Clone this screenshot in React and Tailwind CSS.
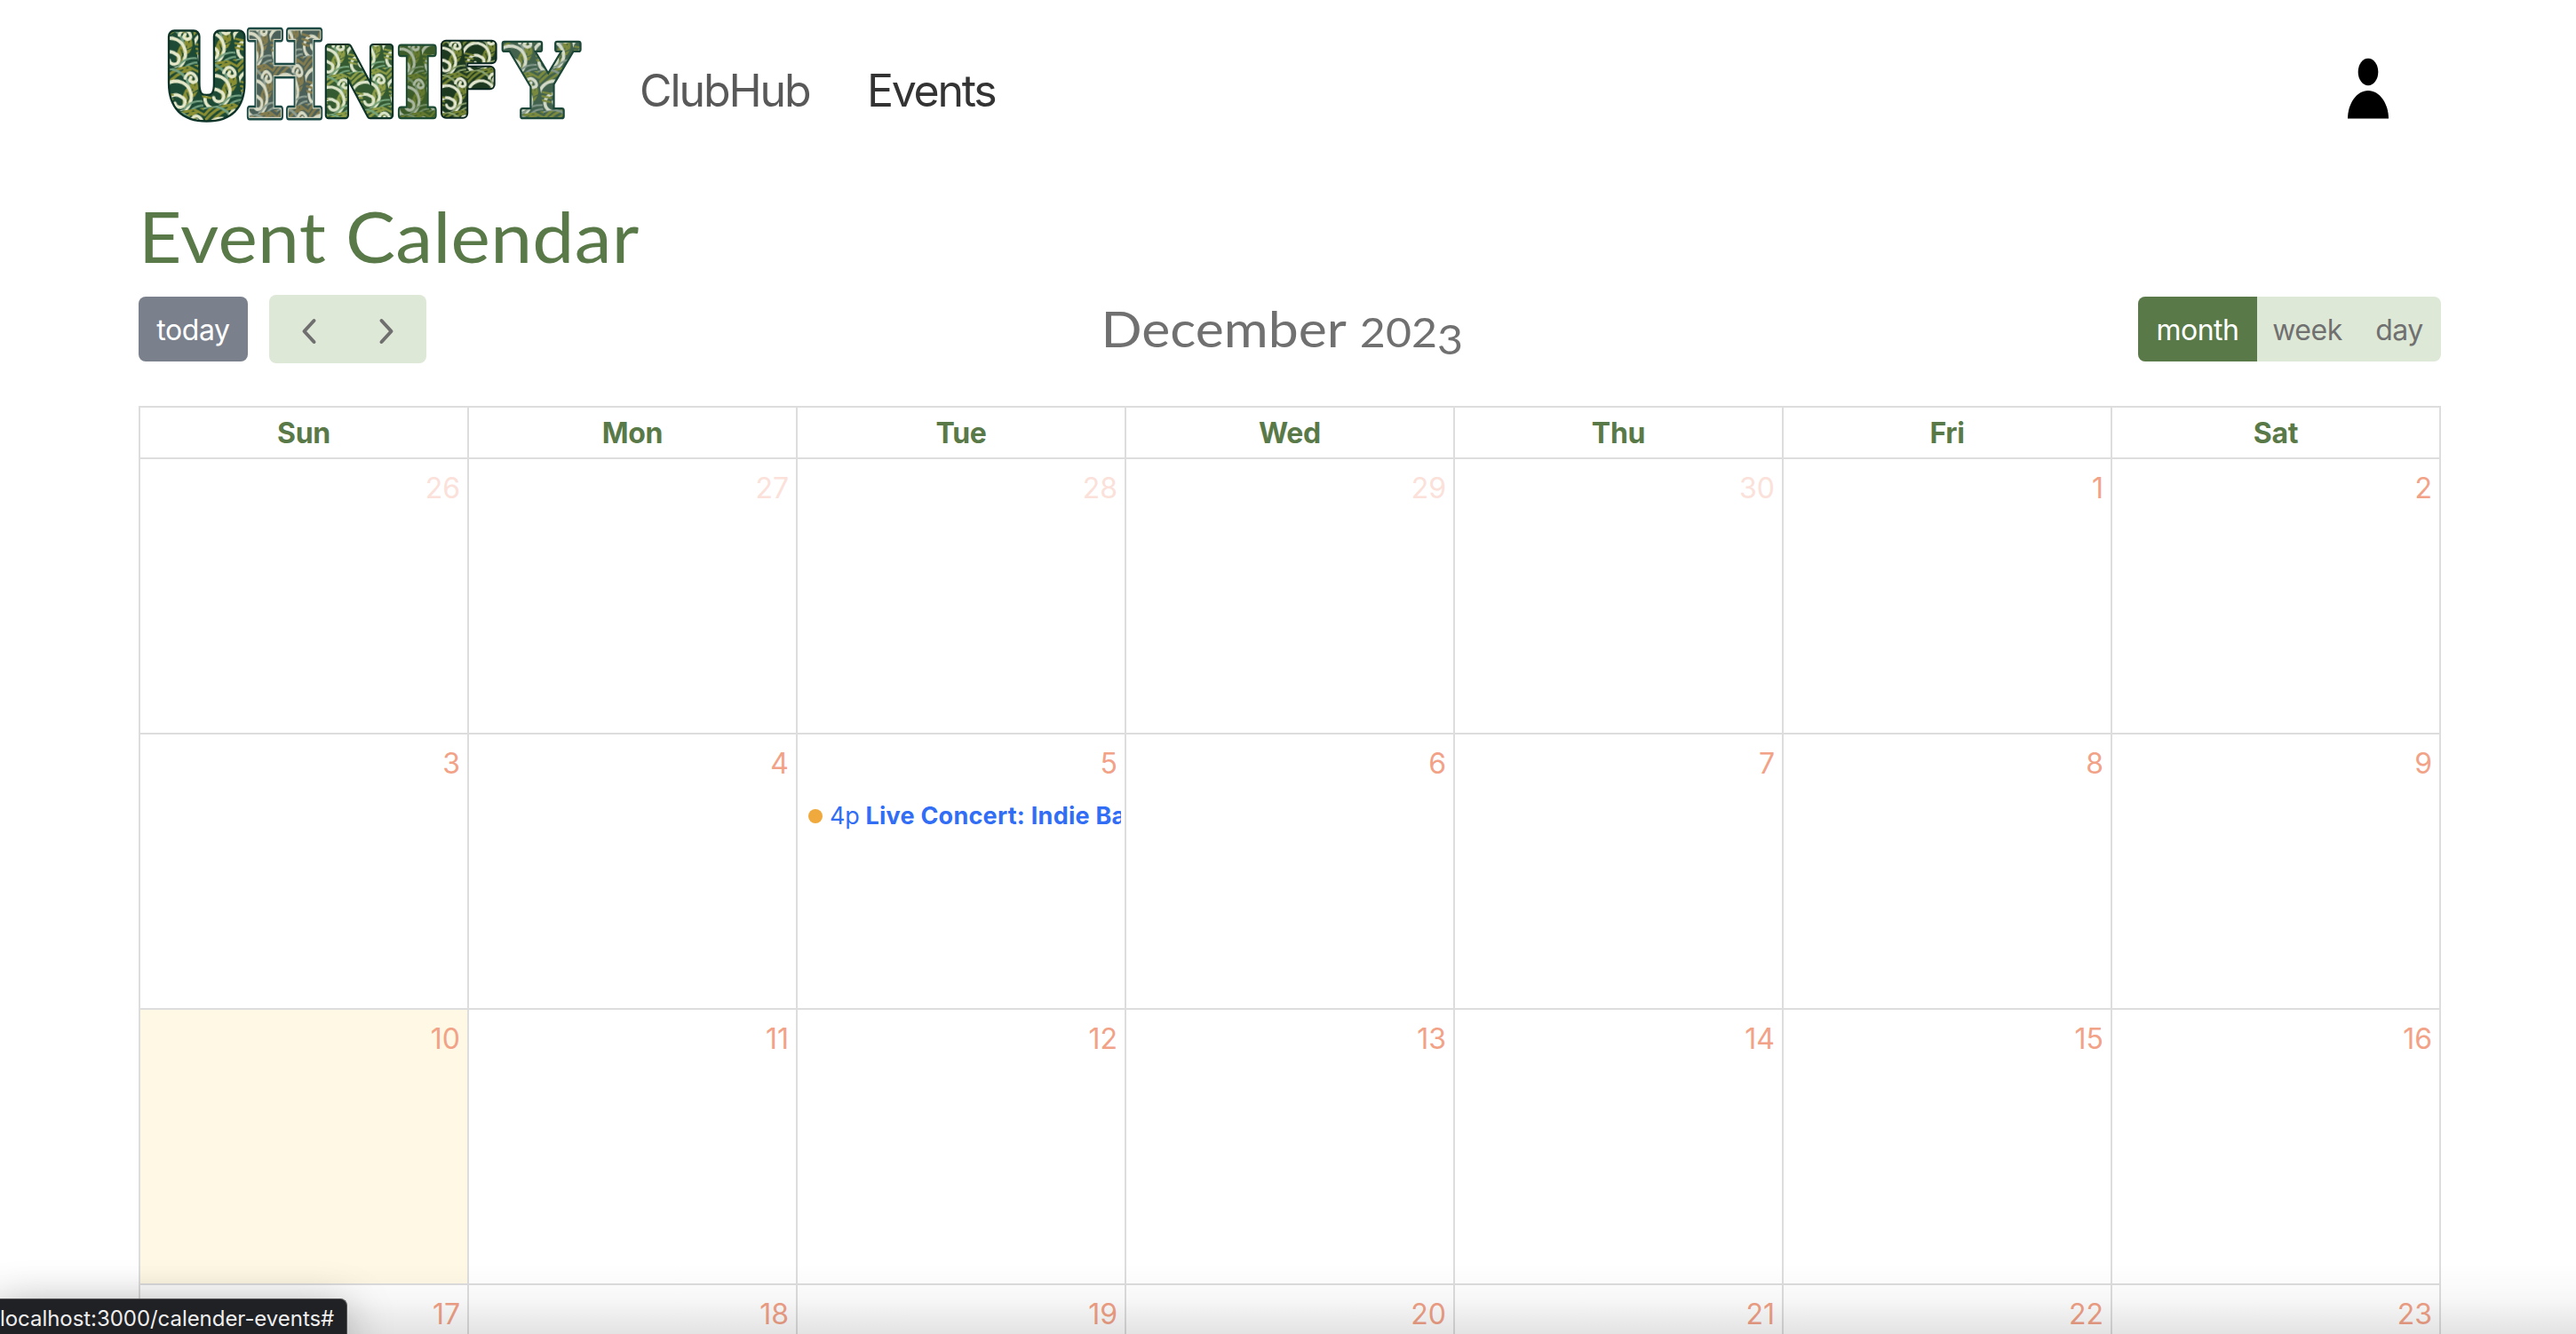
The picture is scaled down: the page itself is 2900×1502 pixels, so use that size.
const WAVES = [
  'M-2 30a15 15 0 1 1 18 12a9 9 0 1 1 2-14a5 5 0 1 1-7 5',
  'M-6 38a21 21 0 1 1 33-16',
  'M-12 42a27 27 0 1 1 43-18',
];

function Foliage({ id, base, leaf, pale, mid }) {
  return (
    <pattern id={id} width="38" height="41" patternUnits="userSpaceOnUse" patternTransform="rotate(-8)">
      <rect width="38" height="41" fill={base} />
      <g fill="none" strokeLinecap="round">
        <path d="M0 7Q12-4 22-1M0 12Q14 0 26 1M3 16Q18 4 32 3" stroke={leaf} strokeWidth="2.6" />
        <path d="M19 38Q17 22 34 15Q40 25 19 38Z" fill={leaf} stroke={leaf} strokeWidth="1" />
        <path d="M21 36L33 18M24 25l1 6l6-1M28 21l1 5l6-2" stroke={base} strokeWidth="1" />
        <path d={WAVES[1]} stroke={mid} strokeWidth="2.4" />
        <path d={WAVES[2]} stroke={leaf} strokeWidth="1.8" />
        <path d={WAVES[0]} stroke={pale} strokeWidth="3.2" />
        <path d="M24 11q5-8 10-1q3 6-3 6q-5-2-1-5" stroke={pale} strokeWidth="3" />
        <path d="M18 41q8-9 20-6M24 43q6-5 14-4" stroke={mid} strokeWidth="1.8" />
        <path d="M2 22l8 3M1 26l8 3M0 30l8 3" stroke={leaf} strokeWidth="2" />
        <path d="M28 0l10 7M33-2l6 4" stroke={leaf} strokeWidth="2.2" />
      </g>
    </pattern>
  );
}

// x, top, w, h: outer box of each letter; grow: how much its strokes are thickened.
const LETTERS = [
  { c: 'U', x: 189, w: 87, top: 34, h: 100, grow: 9, family: 'DejaVu Sans', fill: 'url(#fa)', edge: '#0d3328' },
  { c: 'H', x: 277, w: 87, top: 31.5, h: 102.5, grow: 1, rimWidth: 2, family: 'DejaVu Serif', fill: 'url(#fb)', edge: '#1d4a44', rim: '#cfd3bf' },
  { c: 'N', x: 366, w: 77, top: 49, h: 85, grow: 4, family: 'DejaVu Sans', fill: 'url(#fc)', edge: '#0d3328' },
  { c: 'I', x: 447, w: 45.5, top: 49, h: 85, grow: 4, family: 'DejaVu Serif', fill: 'url(#fd)', edge: '#1c4a33' },
  { c: 'F', x: 496, w: 68, top: 46, h: 88, grow: 8, family: 'DejaVu Sans', fill: 'url(#fe)', edge: '#0a2620' },
  { c: 'Y', x: 566, w: 89, top: 46.5, h: 87.5, grow: 2, family: 'DejaVu Serif', fill: 'url(#ff)', edge: '#1c4738' },
];

// Left bearing and ink width of each bold glyph at 100px.
const INK = { U: [8.5, 64], H: [4, 86.5], N: [9.2, 65.3], I: [4, 39], F: [9.2, 55.2], Y: [0, 73] };

function Letter({ l }) {
  const rim = l.rim ? l.rimWidth : 0;
  const full = l.grow + rim + 4;
  const sx = (l.w - full) / INK[l.c][1];
  const sy = (l.h - full) / 72.9;
  return (
    <g
      transform={`translate(${l.x + full / 2 - INK[l.c][0] * sx} ${l.top + l.h - full / 2}) scale(${sx} ${sy})`}
      strokeLinejoin="round"
    >
      <text fontSize="100" fontWeight="700" fontFamily={l.family} fill={l.edge} stroke={l.edge} strokeWidth={full}>
        {l.c}
      </text>
      {l.rim && (
        <text aria-hidden="true" fontSize="100" fontWeight="700" fontFamily={l.family} fill={l.rim} stroke={l.rim} strokeWidth={l.grow + rim}>
          {l.c}
        </text>
      )}
      <text aria-hidden="true" fontSize="100" fontWeight="700" fontFamily={l.family} fill={l.fill} stroke={l.fill} strokeWidth={l.grow}>
        {l.c}
      </text>
    </g>
  );
}

function Logo() {
  return (
    <svg className="block h-[160px] w-[680px] shrink-0 overflow-visible" viewBox="0 0 680 160" role="img" aria-label="UHnify">
      <defs>
        <Foliage id="fa" base="#1d4a34" leaf="#8a8e32" pale="#e5e8c9" mid="#73a081" />
        <Foliage id="fb" base="#4a6058" leaf="#857c4e" pale="#d8dac4" mid="#8d9e92" />
        <Foliage id="fc" base="#345a32" leaf="#8d9c45" pale="#dce5c9" mid="#74a379" />
        <Foliage id="fd" base="#3b5b29" leaf="#64782e" pale="#a9b7a0" mid="#718c64" />
        <Foliage id="fe" base="#1d3920" leaf="#738331" pale="#e2e6cf" mid="#8ba16c" />
        <Foliage id="ff" base="#42624e" leaf="#7b8a3c" pale="#d4dac8" mid="#83988b" />
      </defs>
      {LETTERS.map((l) => (
        <Letter key={l.c} l={l} />
      ))}
    </svg>
  );
}

const DAYS = ['Sun', 'Mon', 'Tue', 'Wed', 'Thu', 'Fri', 'Sat'];
const WEEKS = [
  [26, 27, 28, 29, 30, 1, 2],
  [3, 4, 5, 6, 7, 8, 9],
  [10, 11, 12, 13, 14, 15, 16],
  [17, 18, 19, 20, 21, 22, 23],
];

function Chevron({ d }) {
  return (
    <svg className="h-8 w-8" viewBox="0 0 32 32" fill="none" stroke="#6f6f6f" strokeWidth="4" strokeLinecap="round" strokeLinejoin="round">
      <path d={d} />
    </svg>
  );
}

export default function App() {
  return (
    <div className="relative flex h-[1502px] w-[2900px] flex-col overflow-hidden bg-white font-['Inter','Liberation_Sans',sans-serif]">
      <header className="flex h-[200px] shrink-0 items-start">
        <Logo />
        <nav className="flex pt-[70px] text-[50px] leading-[64px]">
          <a className="ml-[40px] w-[256px] whitespace-nowrap text-[#595959] tracking-[-2.1px]">ClubHub</a>
          <a className="whitespace-nowrap text-[#333333] tracking-[-2.3px]">Events</a>
        </nav>
        <svg className="mt-[64px] mr-[210px] ml-auto h-[70px] w-[48px]" viewBox="0 0 48 70">
          <ellipse cx="24" cy="17" rx="11.3" ry="15.3" />
          <path d="M1 69.5C1 53 11 38 24 38S47 53 47 69.5Z" />
        </svg>
      </header>

      <main className="ml-[156px] w-[2592px]">
        <h1 className="h-[132px] origin-left scale-x-[1.05] pt-[17px] font-['Lato',sans-serif] text-[80px] leading-[96px] tracking-[0.3px] whitespace-nowrap text-[#597a48]">Event Calendar</h1>

        <div className="flex h-[77px] items-center justify-between">
          <div className="flex w-[324px] items-center gap-[24px]">
            <button className="h-[73px] w-[123px] rounded-[8px] bg-[#7a808c] pt-[2px] text-[32px] tracking-[-0.4px] text-white">today</button>
            <div className="flex h-[77px] w-[177px] items-center rounded-[8px] bg-[#dee8d7]">
              <span className="flex w-[89px] justify-center pt-[5px]"><Chevron d="M21.500 4L10.500 16L21.500 28" /></span>
              <span className="flex w-[88px] justify-center pt-[5px]"><Chevron d="M9.500 4L20.500 16L9.500 28" /></span>
            </div>
          </div>
          <h2 className="flex scale-x-[1.065] items-baseline font-['Lato',sans-serif] text-[57px] leading-[68px] whitespace-nowrap text-[#707070]">
            <span>December</span>
            <span className="ml-[14px] text-[47px]">202</span>
            <span className="relative top-[8px] text-[47px]">3</span>
          </h2>
          <div className="flex h-[73px] w-[341px] overflow-hidden rounded-[8px] bg-[#dee8d7] text-[32px] leading-[75px] tracking-[-0.5px] text-[#707070]">
            <span className="w-[134px] bg-[#597a48] text-center text-white">month</span>
            <span className="w-[113px] text-center">week</span>
            <span className="w-[94px] text-center">day</span>
          </div>
        </div>

        <table className="mt-[48px] w-[2592px] table-fixed border-collapse">
          <thead>
            <tr className="h-[58px]">
              {DAYS.map((d) => (
                <th key={d} className="border-2 border-[#dddddd] p-0 pt-[2px] text-[32px] leading-[54px] font-bold tracking-[-0.3px] text-[#597a48]">{d}</th>
              ))}
            </tr>
          </thead>
          <tbody>
            {WEEKS.map((week, r) => (
              <tr key={r} className="h-[310px]">
                {week.map((n) => (
                  <td key={n} className={n === 10 ? 'border-2 border-[#dddddd] bg-[#fef8e4] p-0 align-top' : 'border-2 border-[#dddddd] p-0 align-top'}>
                    <div className={r === 0 && n > 20 ? 'pt-[9px] pr-[8px] text-right text-[32px] leading-[48px] text-[#fbe1d9]' : 'pt-[9px] pr-[8px] text-right text-[32px] leading-[48px] text-[#f2a287]'}>{n}</div>
                    {n === 5 && (
                      <div className="mt-[13px] mr-[4px] ml-[12px] flex h-[44px] items-center overflow-hidden text-[27px] tracking-[0.25px] whitespace-nowrap text-[#316df5]">
                        <span className="mr-[8px] h-4 w-4 shrink-0 rounded-full bg-[#f0a93c]" />
                        <span className="mr-[7px] tracking-[-0.3px]">4p</span>
                        <span className="font-bold">Live Concert: Indie Band</span>
                      </div>
                    )}
                  </td>
                ))}
              </tr>
            ))}
          </tbody>
        </table>
      </main>

      <div className="pointer-events-none absolute bottom-0 left-0 h-[80px] w-full bg-linear-to-b from-black/0 via-black/[0.03] to-black/[0.11]" />

      <div className="absolute top-[1462px] left-0 flex h-[44px] w-[391px] items-center rounded-tr-[8px] border-t border-r border-[#555555] bg-[#202125] text-[24px] tracking-[-0.05px] whitespace-nowrap text-[#eeeeee] shadow-[0_12px_50px_rgba(0,0,0,0.35)]">
        localhost:3000/calender-events#
      </div>
    </div>
  );
}
